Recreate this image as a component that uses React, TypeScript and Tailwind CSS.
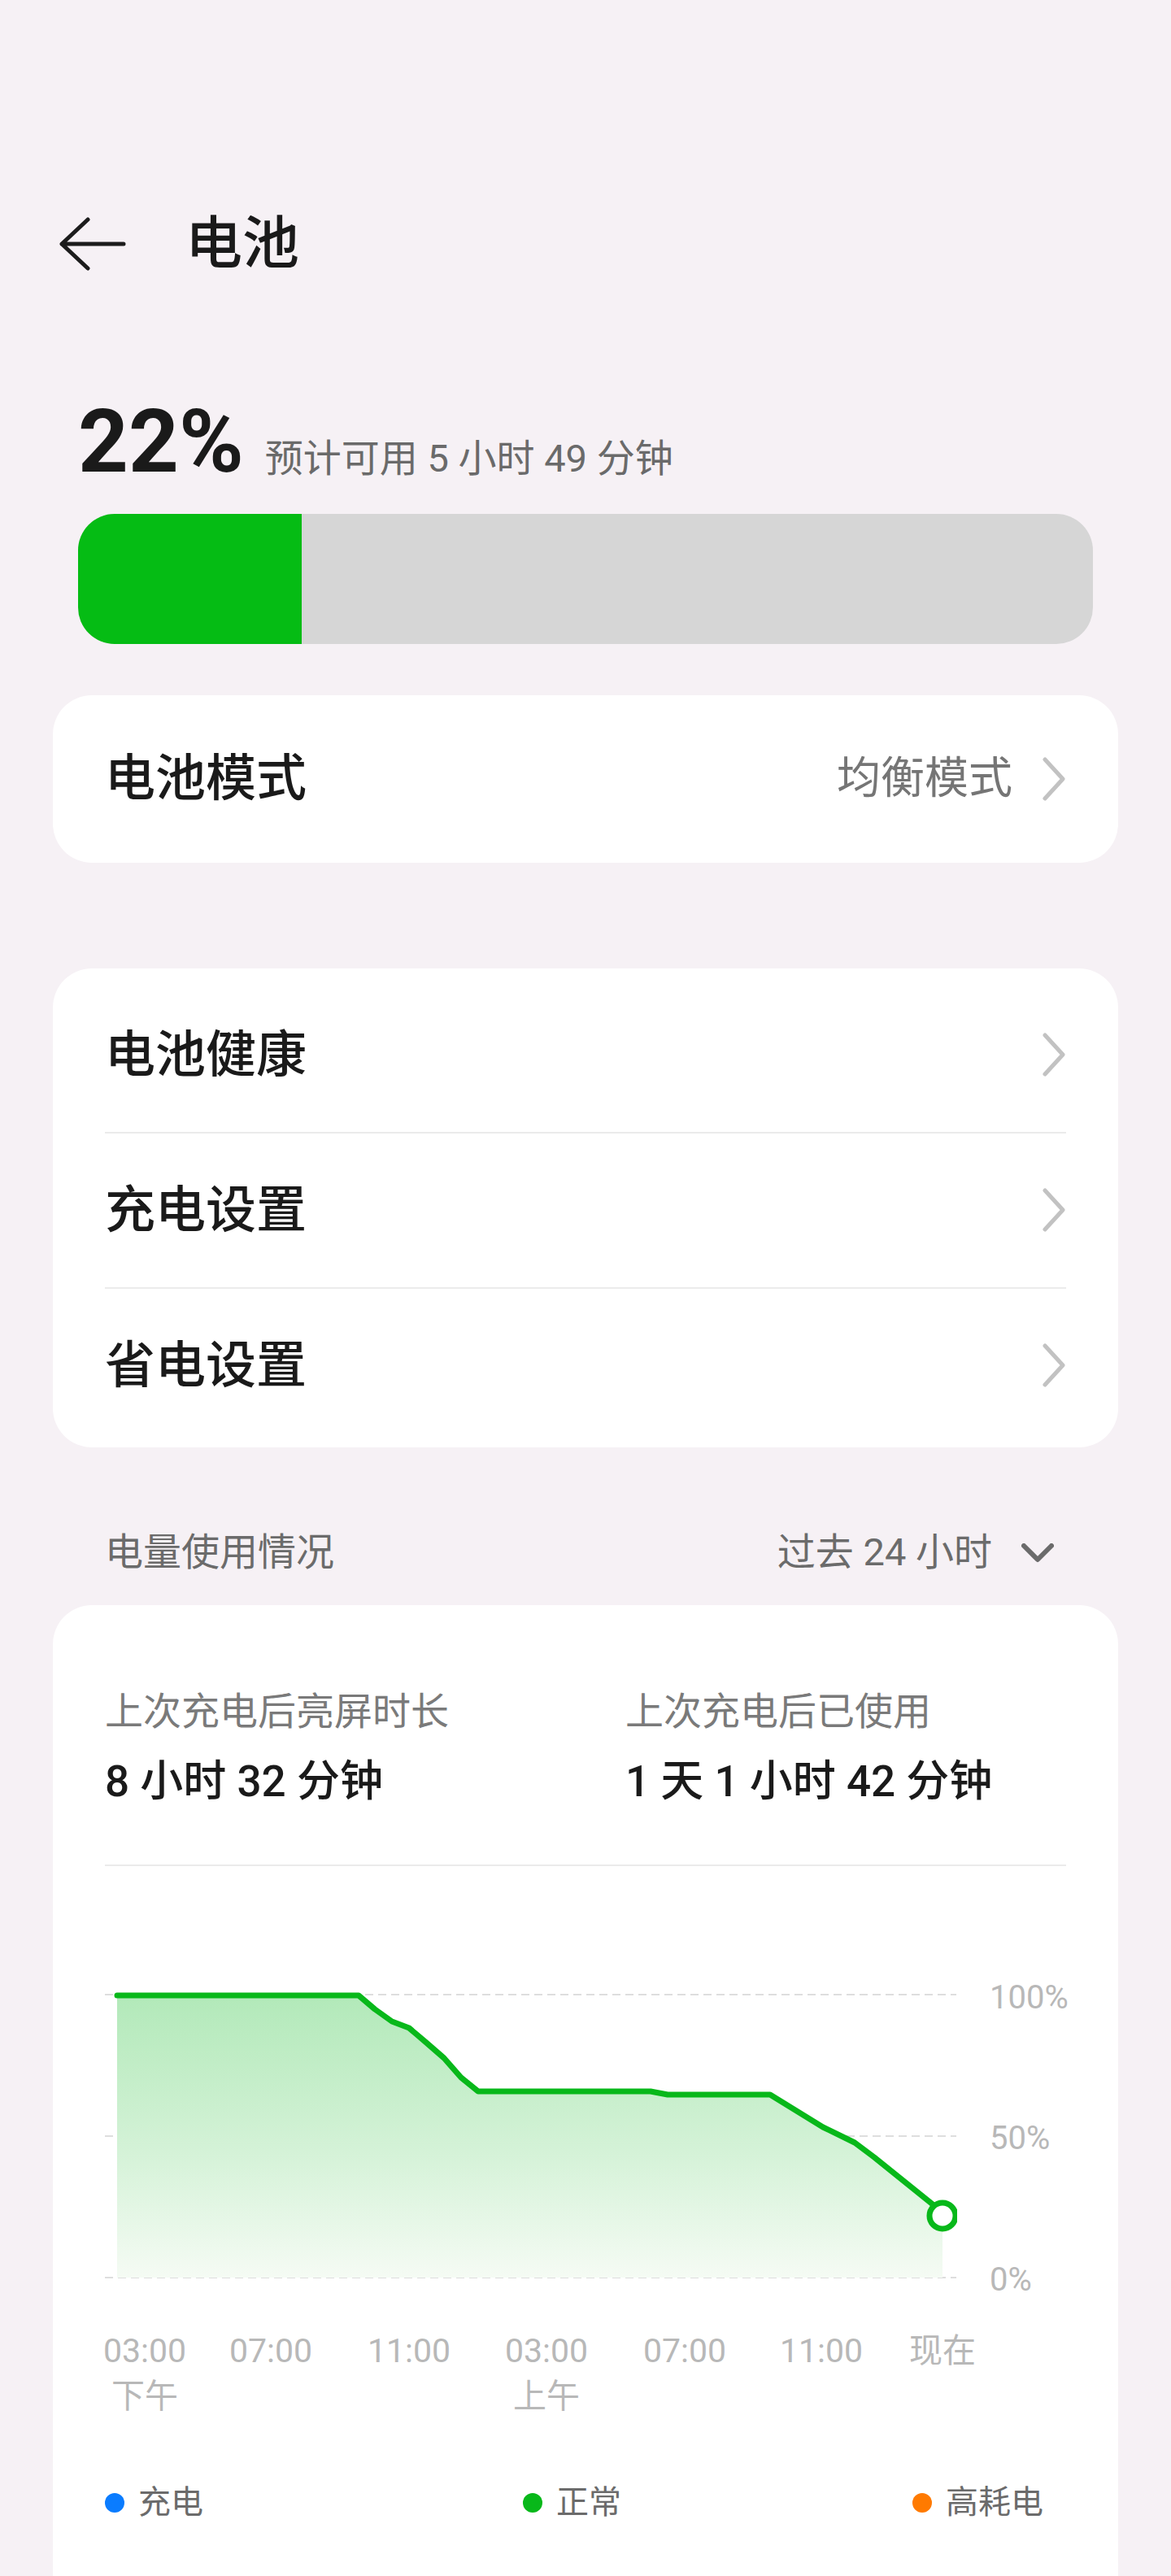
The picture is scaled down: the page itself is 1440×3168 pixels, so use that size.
import React from "react";

const FONT = "font-['Roboto','Noto_Sans_CJK_SC',sans-serif]";

const linePoints: [number, number][] = [
  [15, 51], [312, 51], [332, 68], [353, 83], [374, 91], [394, 108], [417, 128],
  [438, 152], [459, 169], [671, 169], [692, 173], [818, 173], [883, 213],
  [922, 232], [946, 250], [1018, 308], [1030, 322],
];

const timeLabels = [
  { w: "w-[98px]", t: "03:00", sub: "下午" },
  { w: "w-[212px]", t: "07:00" },
  { w: "w-[128px]", t: "11:00" },
  { w: "w-[210px]", t: "03:00", sub: "上午" },
  { w: "w-[130px]", t: "07:00" },
  { w: "w-[206px]", t: "11:00" },
  { w: "w-[92px]", t: "现在" },
];

function ChevronRight() {
  return (
    <svg width="30" height="54" viewBox="0 0 30 54" fill="none">
      <polyline points="4,3 26,27 4,51" stroke="#c2c2c2" strokeWidth="5" strokeLinecap="round" strokeLinejoin="round" />
    </svg>
  );
}

function MenuRow({ label }: { label: string }) {
  return (
    <div className="h-[189px] flex items-center justify-between">
      <span className="text-[62px] font-medium text-[#1a1a1a]">{label}</span>
      <ChevronRight />
    </div>
  );
}

function UsageChart() {
  const pts = linePoints.map((p) => p.join(",")).join(" ");
  const area = `${pts} 1030,398 15,398`;
  return (
    <div className="flex">
      <svg width="1048" height="420" viewBox="0 0 1048 420" className="shrink-0">
        <defs>
          <linearGradient id="fillGrad" x1="0" y1="50" x2="0" y2="398" gradientUnits="userSpaceOnUse">
            <stop offset="0" stopColor="#b2e9b9" />
            <stop offset="0.55" stopColor="#d4f2d7" />
            <stop offset="1" stopColor="#f5fbf4" />
          </linearGradient>
        </defs>
        {[50, 224, 398].map((y) => (
          <line key={y} x1="0" y1={y} x2="1047" y2={y} stroke="#dedede" strokeWidth="2" strokeDasharray="10 6" />
        ))}
        <polygon points={area} fill="url(#fillGrad)" />
        <polyline points={pts} fill="none" stroke="#08b81a" strokeWidth="7" strokeLinejoin="round" strokeLinecap="round" />
        <circle cx="1030" cy="322" r="16" fill="#ffffff" stroke="#08b81a" strokeWidth="7" />
      </svg>
      <div className="relative flex-1 text-[40px] leading-[48px] text-[#b8b8b8]">
        <span className="absolute left-[40px] top-[30px]">100%</span>
        <span className="absolute left-[40px] top-[203px]">50%</span>
        <span className="absolute left-[40px] top-[377px]">0%</span>
      </div>
    </div>
  );
}

function Legend({ color, label }: { color: string; label: string }) {
  return (
    <div className="flex items-center gap-[17px]">
      <span className={`w-[24px] h-[24px] rounded-full ${color}`} />
      <span className="text-[40px] leading-[56px] text-[#6b6b6b]">{label}</span>
    </div>
  );
}

export default function App() {
  return (
    <div className={`h-[3168px] overflow-hidden bg-[#f6f1f5] ${FONT}`}>
      <header className="mt-[240px] h-[120px] flex items-center pl-[71px]">
        <svg width="84" height="66" viewBox="0 0 84 66" fill="none">
          <path d="M5 33 H81 M37 3 L5 33 L37 63" stroke="#1c1c1c" strokeWidth="5" strokeLinecap="round" strokeLinejoin="round" />
        </svg>
        <h1 className="ml-[73px] text-[70px] leading-none font-medium text-[#1a1a1a]">电池</h1>
      </header>

      <section className="px-[96px] mt-[129px]">
        <div className="flex items-baseline">
          <span className="text-[108px] leading-none font-bold text-[#1a1a1a]">22%</span>
          <span className="ml-[26px] text-[47px] text-[#6a6a6a]">预计可用 5 小时 49 分钟</span>
        </div>
        <div className="mt-[32px] h-[160px] rounded-[45px] bg-[#d6d6d6] overflow-hidden flex">
          <div className="w-[22%] bg-[#05bc14]" />
        </div>
      </section>

      <div className="mx-[65px] mt-[63px] h-[206px] rounded-[48px] bg-white px-[64px] flex items-center justify-between">
        <span className="text-[62px] font-medium text-[#1a1a1a]">电池模式</span>
        <div className="flex items-center gap-[36px]">
          <span className="text-[54px] text-[#757575]">均衡模式</span>
          <ChevronRight />
        </div>
      </div>

      <div className="mx-[65px] mt-[130px] rounded-[48px] bg-white px-[64px] pt-[12px] pb-[6px]">
        <MenuRow label="电池健康" />
        <div className="h-[2px] bg-[#ebebeb]" />
        <MenuRow label="充电设置" />
        <div className="h-[2px] bg-[#ebebeb]" />
        <MenuRow label="省电设置" />
      </div>

      <div className="mt-[100px] h-[60px] pl-[129px] pr-[144px] flex items-center justify-between text-[47px] text-[#6b6b6b]">
        <span>电量使用情况</span>
        <div className="flex items-center gap-[36px]">
          <span>过去 24 小时</span>
          <svg width="40" height="24" viewBox="0 0 40 24" fill="none">
            <polyline points="3,3 20,20 37,3" stroke="#6b6b6b" strokeWidth="6" strokeLinecap="round" strokeLinejoin="round" />
          </svg>
        </div>
      </div>

      <div className="mx-[65px] mt-[34px] rounded-t-[48px] bg-white px-[64px] pt-[101px] pb-[200px]">
        <div className="grid grid-cols-[640px_1fr]">
          <div>
            <div className="text-[47px] leading-[60px] text-[#7a7a7a]">上次充电后亮屏时长</div>
            <div className="mt-[24px] text-[53px] leading-[65px] font-medium text-[#1a1a1a]">8 小时 32 分钟</div>
          </div>
          <div>
            <div className="text-[47px] leading-[60px] text-[#7a7a7a]">上次充电后已使用</div>
            <div className="mt-[24px] text-[53px] leading-[65px] font-medium text-[#1a1a1a]">1 天 1 小时 42 分钟</div>
          </div>
        </div>
        <div className="mt-[69px] h-[2px] bg-[#ebebeb]" />

        <div className="mt-[108px]">
          <UsageChart />
        </div>

        <div className="mt-[40px] flex text-[41px] leading-[56px] text-[#b8b8b8]">
          {timeLabels.map((l, i) => (
            <div key={i} className={`${l.w} flex flex-col items-center whitespace-nowrap`}>
              <span>{l.t}</span>
              {l.sub && <span>{l.sub}</span>}
            </div>
          ))}
        </div>

        <div className="mt-[75px] grid grid-cols-[514px_479px_auto]">
          <Legend color="bg-[#0a7cff]" label="充电" />
          <Legend color="bg-[#08b81a]" label="正常" />
          <Legend color="bg-[#ff7a00]" label="高耗电" />
        </div>
      </div>
    </div>
  );
}
